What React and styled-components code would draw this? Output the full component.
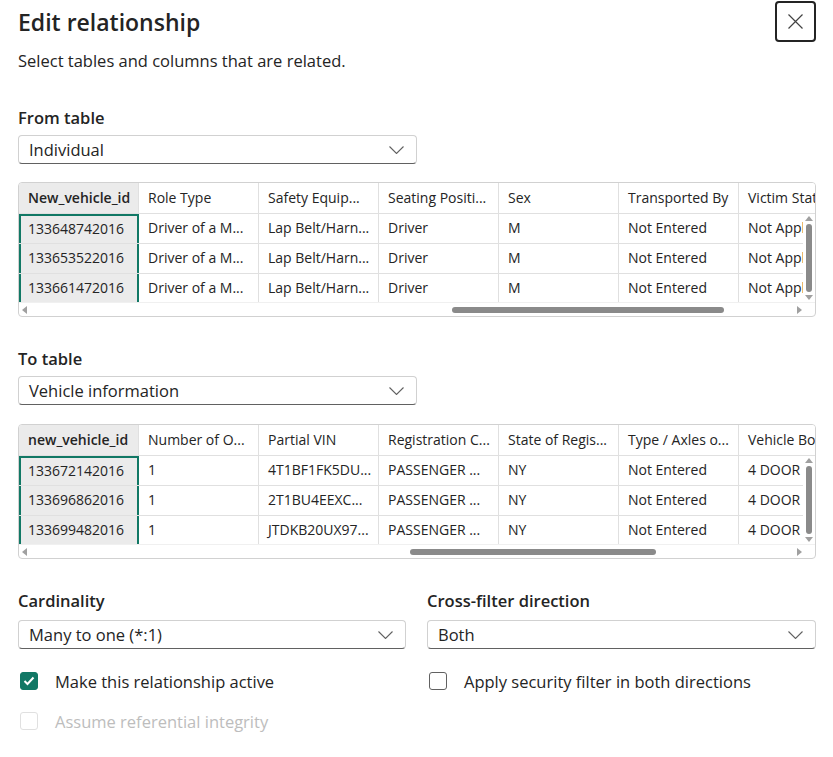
import React from "react";
import styled, { createGlobalStyle } from "styled-components";

const GlobalStyle = createGlobalStyle`
  body {
    margin: 0;
    background: #ffffff;
    font-family: "Segoe UI", "Open Sans", "Noto Sans", sans-serif;
    color: #242424;
  }
`;

const fromTable = {
  headers: [
    "New_vehicle_id",
    "Role Type",
    "Safety Equip...",
    "Seating Positi...",
    "Sex",
    "Transported By",
    "Victim Status",
  ],
  rows: [
    ["133648742016", "Driver of a M...", "Lap Belt/Harn...", "Driver", "M", "Not Entered", "Not Applicable"],
    ["133653522016", "Driver of a M...", "Lap Belt/Harn...", "Driver", "M", "Not Entered", "Not Applicable"],
    ["133661472016", "Driver of a M...", "Lap Belt/Harn...", "Driver", "M", "Not Entered", "Not Applicable"],
  ],
  thumb: { left: 434, width: 272 },
};

const toTable = {
  headers: [
    "new_vehicle_id",
    "Number of O...",
    "Partial VIN",
    "Registration C...",
    "State of Regis...",
    "Type / Axles o...",
    "Vehicle Body Type",
  ],
  rows: [
    ["133672142016", "1", "4T1BF1FK5DU...", "PASSENGER ...", "NY", "Not Entered", "4 DOOR SEDAN"],
    ["133696862016", "1", "2T1BU4EEXC...", "PASSENGER ...", "NY", "Not Entered", "4 DOOR SEDAN"],
    ["133699482016", "1", "JTDKB20UX97...", "PASSENGER ...", "NY", "Not Entered", "4 DOOR SEDAN"],
  ],
  thumb: { left: 392, width: 246 },
};

const Chevron = () => (
  <svg width="15" height="8" viewBox="0 0 15 8">
    <polyline points="0.5,0.5 7.5,7.5 14.5,0.5" fill="none" stroke="#616161" strokeWidth="1.1" />
  </svg>
);

const Select = ({ value }) => (
  <SelectBox>
    <span>{value}</span>
    <Chevron />
  </SelectBox>
);

const Checkbox = ({ checked, disabled, label }) => (
  <CheckRow disabled={disabled}>
    <Box checked={checked} disabled={disabled}>
      {checked && (
        <svg width="12" height="10" viewBox="0 0 12 10">
          <polyline points="1.5,5 4.5,8 10.5,1.5" fill="none" stroke="#fff" strokeWidth="2" />
        </svg>
      )}
    </Box>
    {label}
  </CheckRow>
);

const Preview = ({ data }) => (
  <TableFrame>
    <HeaderRow>
      {data.headers.map((h, i) => (
        <HeadCell key={h} $key={i === 0}>
          {h}
        </HeadCell>
      ))}
    </HeaderRow>
    <Body>
      <Rows>
        {data.rows.map((row, r) => (
          <Row key={r}>
            {row.map((c, i) => (
              <Cell key={i} $key={i === 0} $top={r === 0}>
                {c}
              </Cell>
            ))}
          </Row>
        ))}
      </Rows>
      <VScroll>
        <ArrowUp />
        <VThumb />
        <ArrowDown />
      </VScroll>
    </Body>
    <HScroll>
      <ArrowLeft />
      <HTrack>
        <HThumb style={{ marginLeft: data.thumb.left - 9, width: data.thumb.width }} />
      </HTrack>
      <ArrowRight />
    </HScroll>
  </TableFrame>
);

const App = () => (
  <>
    <GlobalStyle />
    <Page>
      <TopBar>
        <Title>Edit relationship</Title>
        <CloseButton aria-label="Close">
          <svg width="15" height="15" viewBox="0 0 15 15">
            <path d="M0.5 0.5 L14.5 14.5 M14.5 0.5 L0.5 14.5" stroke="#424242" strokeWidth="1.2" />
          </svg>
        </CloseButton>
      </TopBar>
      <Subtitle>Select tables and columns that are related.</Subtitle>

      <Label $top={35}>From table</Label>
      <Narrow $after={18}>
        <Select value="Individual" />
      </Narrow>
      <Preview data={fromTable} />

      <Label $top={31}>To table</Label>
      <Narrow $after={19}>
        <Select value="Vehicle information" />
      </Narrow>
      <Preview data={toTable} />

      <Options>
        <Column>
          <Label $top={0} $gap={8}>Cardinality</Label>
          <Select value="Many to one (*:1)" />
          <Checkbox checked label="Make this relationship active" />
          <Checkbox disabled label="Assume referential integrity" />
        </Column>
        <Column>
          <Label $top={0} $gap={8}>Cross-filter direction</Label>
          <Select value="Both" />
          <Checkbox label="Apply security filter in both directions" />
        </Column>
      </Options>
    </Page>
  </>
);

const Page = styled.div`
  padding: 1px 17px 20px 18px;
  width: 798px;
`;

const TopBar = styled.div`
  display: flex;
  justify-content: space-between;
  align-items: flex-start;
`;

const Title = styled.h1`
  margin: 5px 0 0;
  font-size: 23px;
  line-height: 32px;
  font-weight: 600;
  color: #242424;
`;

const CloseButton = styled.button`
  width: 41px;
  height: 41px;
  display: flex;
  align-items: center;
  justify-content: center;
  background: #fff;
  border: 2px solid #242424;
  border-radius: 4px;
  padding: 0;
`;

const Subtitle = styled.p`
  margin: 8px 0 0;
  font-size: 16.5px;
  line-height: 22px;
  color: #242424;
`;

const Label = styled.div`
  margin: ${p => p.$top}px 0 ${p => p.$gap || 6}px;
  font-size: 16.5px;
  line-height: 22px;
  font-weight: 600;
`;

const Narrow = styled.div`
  width: 399px;
  margin-bottom: ${p => p.$after}px;
`;

const SelectBox = styled.div`
  height: 29px;
  box-sizing: border-box;
  display: flex;
  align-items: center;
  justify-content: space-between;
  padding: 0 12px 0 10px;
  border: 1px solid #d1d1d1;
  border-bottom-color: #616161;
  border-radius: 4px;
  font-size: 16.5px;
  color: #242424;
  background: #fff;
`;

const TableFrame = styled.div`
  width: 798px;
  box-sizing: border-box;
  border: 1px solid #d1d1d1;
  border-radius: 4px;
  overflow: hidden;
  font-size: 14px;
`;

const HeaderRow = styled.div`
  display: flex;
  height: 30px;
  border-bottom: 1px solid #e0e0e0;
  overflow: hidden;
`;

const HeadCell = styled.div`
  flex: 0 0 120px;
  box-sizing: border-box;
  padding: 0 9px;
  line-height: 29px;
  white-space: nowrap;
  overflow: hidden;
  border-right: 1px solid #e0e0e0;
  background: ${p => (p.$key ? "#ebebeb" : "#fff")};
  font-weight: ${p => (p.$key ? 600 : 400)};
`;

const Body = styled.div`
  display: flex;
  height: 88px;
`;

const Rows = styled.div`
  flex: 1;
  overflow: hidden;
`;

const Row = styled.div`
  display: flex;
  height: 30px;
  border-bottom: 1px solid #e0e0e0;
  box-sizing: border-box;
`;

const Cell = styled.div`
  flex: 0 0 120px;
  box-sizing: border-box;
  padding: 0 ${p => (p.$key ? 7 : 9)}px;
  line-height: 28px;
  white-space: nowrap;
  overflow: hidden;
  border-right: 1px solid #e0e0e0;
  ${p =>
    p.$key &&
    `
    background: #ebebeb;
    border-left: 2px solid #117865;
    border-right: 2px solid #117865;
    border-top: ${p.$top ? "2px solid #117865" : "0"};
    line-height: ${p.$top ? 26 : 28}px;
  `}
`;

const VScroll = styled.div`
  flex: 0 0 12px;
  display: flex;
  flex-direction: column;
  align-items: center;
  padding: 2px 0;
  box-sizing: border-box;
`;

const ArrowUp = styled.div`
  width: 0;
  height: 0;
  border-left: 4px solid transparent;
  border-right: 4px solid transparent;
  border-bottom: 5px solid #a0a0a0;
`;

const ArrowDown = styled.div`
  width: 0;
  height: 0;
  border-left: 4px solid transparent;
  border-right: 4px solid transparent;
  border-top: 5px solid #a0a0a0;
`;

const VThumb = styled.div`
  width: 6px;
  flex: 1;
  margin: 3px 0;
  border-radius: 3px;
  background: #8a8a8a;
`;

const HScroll = styled.div`
  height: 13px;
  display: flex;
  align-items: center;
  padding: 0 3px;
  border-top: 1px solid #f0f0f0;
`;

const ArrowLeft = styled.div`
  width: 0;
  height: 0;
  border-top: 4px solid transparent;
  border-bottom: 4px solid transparent;
  border-right: 5px solid #a0a0a0;
`;

const ArrowRight = styled.div`
  width: 0;
  height: 0;
  margin-right: 10px;
  border-top: 4px solid transparent;
  border-bottom: 4px solid transparent;
  border-left: 5px solid #a0a0a0;
`;

const HTrack = styled.div`
  flex: 1;
  display: flex;
`;

const HThumb = styled.div`
  height: 6px;
  border-radius: 3px;
  background: #8a8a8a;
`;

const Options = styled.div`
  display: grid;
  grid-template-columns: 388px 389px;
  column-gap: 21px;
  margin-top: 31px;
`;

const Column = styled.div`
  display: flex;
  flex-direction: column;
`;

const CheckRow = styled.label`
  display: flex;
  align-items: center;
  gap: 17px;
  margin-top: 21px;
  height: 22px;
  padding-left: 2px;
  font-size: 16.5px;
  color: ${p => (p.disabled ? "#bdbdbd" : "#242424")};

  & + & {
    margin-top: 18px;
  }
`;

const Box = styled.span`
  width: 18px;
  height: 18px;
  box-sizing: border-box;
  border-radius: 3px;
  display: flex;
  align-items: center;
  justify-content: center;
  border: 1px solid ${p => (p.checked ? "#117865" : p.disabled ? "#e0e0e0" : "#616161")};
  background: ${p => (p.checked ? "#117865" : "#fff")};
`;

export default App;
